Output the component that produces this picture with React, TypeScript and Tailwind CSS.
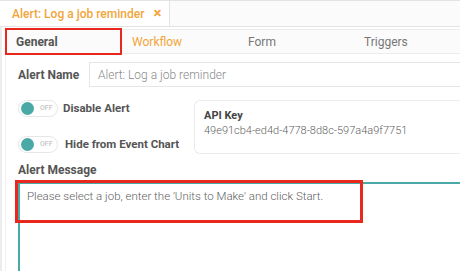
import React from "react";

function Toggle() {
  return (
    <div className="flex h-[17px] w-[40px] shrink-0 items-center rounded-full border border-[#e6e6e6] bg-white pl-[2px]">
      <div className="h-[13px] w-[13px] rounded-full bg-[#4aa9a6]" />
      <span className="ml-[6px] text-[7px] font-medium text-[#c4c4c4]">OFF</span>
    </div>
  );
}

export default function App() {
  return (
    <div
      className="relative h-[271px] w-[460px] overflow-hidden bg-white"
      style={{ fontFamily: "Roboto, 'Noto Sans', sans-serif" }}
    >
      {/* top tab bar */}
      <div className="flex h-[27px] border-t border-b border-[#e3e3e3] bg-[#fbfbfb]">
        <div className="flex w-[170px] shrink-0 items-center whitespace-nowrap border-r border-[#e3e3e3] bg-white pl-[12px] text-[12px] font-medium text-[#f2a53a]">
          <span>Alert: Log a job reminder</span>
          <span className="ml-[9px] text-[15px] font-bold leading-none">×</span>
        </div>
      </div>

      {/* body */}
      <div className="flex h-[244px]">
        <div className="w-[2px] shrink-0 bg-[#ececec]" />
        <div className="w-[3px] shrink-0 bg-white" />
        <div className="min-w-0 flex-1 overflow-hidden border-l border-[#f0f0f0] pt-[2px]">
          {/* sub tabs */}
          <div className="flex h-[25px] items-center whitespace-nowrap border-t border-b border-[#ececec] bg-[#fbfbfb] text-[12px]">
            <div className="w-[116px] shrink-0 pl-[10px] font-bold text-[#555]">General</div>
            <div className="w-[116px] shrink-0 pl-[10px] text-[#f2a53a]">Workflow</div>
            <div className="w-[116px] shrink-0 pl-[10px] text-[#777]">Form</div>
            <div className="w-[116px] shrink-0 pl-[10px] text-[#777]">Triggers</div>
          </div>

          <div className="pl-[12px]">
            {/* Alert name */}
            <div className="mt-[8px] flex items-center">
              <div className="w-[71px] shrink-0 text-[12px] font-bold text-[#555]">Alert Name</div>
              <div className="flex h-[25px] flex-1 items-center border border-r-0 border-[#e6e6e6] pl-[8px] text-[12px] font-light text-[#8a8a8a]">
                Alert: Log a job reminder
              </div>
            </div>

            <div className="mt-[13px] flex">
              <div className="w-[176px] shrink-0">
                <div className="flex h-[17px] items-center">
                  <Toggle />
                  <span className="ml-[5px] whitespace-nowrap text-[11.5px] font-bold text-[#555]">Disable Alert</span>
                </div>
                <div className="mt-[19px] flex h-[17px] items-center">
                  <Toggle />
                  <span className="ml-[7px] whitespace-nowrap text-[11.5px] font-bold text-[#555]">Hide from Event Chart</span>
                </div>
              </div>
              <div className="h-[54px] flex-1 rounded-l-[6px] border border-r-0 border-[#ebebeb] pl-[9px] pt-[8px]">
                <div className="text-[11px] font-bold leading-[14px] text-[#444]">API Key</div>
                <div className="whitespace-nowrap text-[11px] font-light leading-[16px] text-[#5f5f5f]">49e91cb4-ed4d-4778-8d8c-597a4a9f7751</div>
              </div>
            </div>

            <div className="mt-[8px] text-[12px] font-bold leading-[16px] text-[#555]">Alert Message</div>
            <div className="mt-[4px] h-[100px] border-t-2 border-l-2 border-[#4aa9a6] pl-[7px] pt-[4px] text-[11.5px] font-light leading-[16px] text-[#5f5f5f]">
              Please select a job, enter the 'Units to Make' and click Start.
            </div>
          </div>
        </div>
      </div>

      {/* annotation boxes */}
      <div className="pointer-events-none absolute left-[5px] top-[28px] h-[27px] w-[117px] border-2 border-[#e8281d]" />
      <div className="pointer-events-none absolute left-[15px] top-[180px] h-[43px] w-[348px] border-[3px] border-[#e8281d]" />
    </div>
  );
}
